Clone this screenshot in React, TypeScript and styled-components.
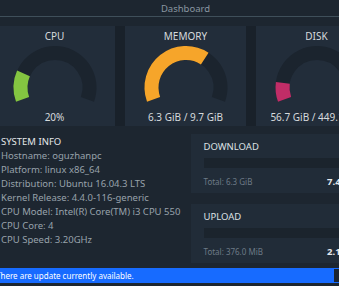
import React from 'react';
import styled, { createGlobalStyle } from 'styled-components';

const GlobalStyle = createGlobalStyle`
  html, body {
    margin: 0;
    padding: 0;
    background: #1d2630;
    overflow: hidden;
    font-family: 'Noto Sans', 'Open Sans', sans-serif;
  }
`;

const Window = styled.div`
  width: 403px;
  height: 286px;
  margin-left: -16px;
  display: flex;
  flex-direction: column;
  background: #1d2630;
`;

const TitleBar = styled.div`
  height: 16px;
  border-bottom: 1px solid #3f4f5a;
  display: flex;
  align-items: center;
  justify-content: center;
  font-size: 9.5px;
  color: #8a96a1;
`;

const Content = styled.div`
  padding: 9px 10px 0;
  display: flex;
  flex-direction: column;
`;

const GaugeRow = styled.div`
  display: grid;
  grid-template-columns: repeat(3, 1fr);
  gap: 10px;
  background: #19212a;
`;

const GaugeCard = styled.div`
  height: 100px;
  background: #222d3a;
  display: flex;
  flex-direction: column;
  align-items: center;
  padding-top: 4px;
  box-sizing: border-box;
`;

const CardTitle = styled.div`
  font-size: 10px;
  line-height: 12px;
  color: #d6dadd;
`;

const GaugeSvg = styled.svg`
  display: block;
  margin-top: 3px;
`;

const GaugeValue = styled.div`
  margin-top: 5px;
  font-size: 10px;
  line-height: 14px;
  color: #d6dadd;
  white-space: nowrap;
`;

const Bottom = styled.div`
  margin-top: 8px;
  display: grid;
  grid-template-columns: 1fr 1fr;
  gap: 10px;
`;

const InfoColumn = styled.div`
  padding: 1px 0 0 7px;
  display: flex;
  flex-direction: column;
`;

const InfoHeading = styled.div`
  font-size: 9.5px;
  line-height: 14px;
  color: #e3e6e9;
`;

const InfoLine = styled.div`
  font-size: 9.5px;
  line-height: 14px;
  color: #98a2ab;
  white-space: nowrap;
`;

const NetColumn = styled.div`
  display: flex;
  flex-direction: column;
  gap: 11px;
`;

const NetCard = styled.div`
  background: #212c38;
  padding: 7px 13px 4px;
  display: flex;
  flex-direction: column;
`;

const NetTitle = styled.div`
  font-size: 9.5px;
  line-height: 12px;
  color: #dde1e4;
`;

const NetBar = styled.div`
  margin-top: 5px;
  height: 10px;
  background: #1b242d;
`;

const NetFooter = styled.div`
  margin-top: 7px;
  display: flex;
  justify-content: space-between;
  align-items: center;
  line-height: 14px;
`;

const NetTotal = styled.span`
  font-size: 8px;
  color: #6d7a86;
`;

const NetSpeed = styled.span`
  font-size: 9.5px;
  font-weight: 700;
  color: #e6e9ec;
  white-space: nowrap;
`;

const StatusBar = styled.div`
  margin-top: 5px;
  margin-left: 12px;
  height: 15px;
  background: #176bff;
  display: flex;
  align-items: center;
  justify-content: space-between;
  padding-right: 12px;
`;

const StatusText = styled.span`
  font-size: 8px;
  color: #ffffff;
  white-space: nowrap;
`;

const StatusButton = styled.button`
  height: 13px;
  width: 41px;
  border: none;
  background: #1c2530;
  color: #dde1e4;
  font-size: 8px;
  padding: 0;
`;

const START = 200;
const SPAN = 220;
const CX = 45;
const CY = 42.5;
const R = 34.5;

const point = (deg: number) => {
  const rad = (deg * Math.PI) / 180;
  return [CX + R * Math.cos(rad), CY - R * Math.sin(rad)];
};

const arc = (from: number, to: number) => {
  const [x1, y1] = point(from);
  const [x2, y2] = point(to);
  const large = from - to > 180 ? 1 : 0;
  return `M ${x1} ${y1} A ${R} ${R} 0 ${large} 1 ${x2} ${y2}`;
};

const Gauge: React.FC<{ value: number; color: string }> = ({ value, color }) => (
  <GaugeSvg width={90} height={60} viewBox="0 0 90 60">
    <path d={arc(START, START - SPAN)} stroke="#1b242e" strokeWidth={14} fill="none" />
    <path d={arc(START, START - SPAN * value)} stroke={color} strokeWidth={14} fill="none" />
  </GaugeSvg>
);

const gauges = [
  { title: 'CPU', value: 0.2, color: '#84c541', label: '20%' },
  { title: 'MEMORY', value: 6.3 / 9.7, color: '#f6a52a', label: '6.3 GiB / 9.7 GiB' },
  { title: 'DISK', value: 56.7 / 449.1, color: '#c12d67', label: '56.7 GiB / 449.1 GiB' },
];

const info = [
  'Hostname: oguzhanpc',
  'Platform: linux x86_64',
  'Distribution: Ubuntu 16.04.3 LTS',
  'Kernel Release: 4.4.0-116-generic',
  'CPU Model: Intel(R) Core(TM) i3 CPU 550',
  'CPU Core: 4',
  'CPU Speed: 3.20GHz',
];

const network = [
  { title: 'DOWNLOAD', total: 'Total: 6.3 GiB', speed: '7.4 kB/s' },
  { title: 'UPLOAD', total: 'Total: 376.0 MiB', speed: '2.1 kB/s' },
];

export default function App() {
  return (
    <>
      <GlobalStyle />
      <Window>
        <TitleBar>Dashboard</TitleBar>
        <Content>
          <GaugeRow>
            {gauges.map((g) => (
              <GaugeCard key={g.title}>
                <CardTitle>{g.title}</CardTitle>
                <Gauge value={g.value} color={g.color} />
                <GaugeValue>{g.label}</GaugeValue>
              </GaugeCard>
            ))}
          </GaugeRow>
          <Bottom>
            <InfoColumn>
              <InfoHeading>SYSTEM INFO</InfoHeading>
              {info.map((line) => (
                <InfoLine key={line}>{line}</InfoLine>
              ))}
            </InfoColumn>
            <NetColumn>
              {network.map((n) => (
                <NetCard key={n.title}>
                  <NetTitle>{n.title}</NetTitle>
                  <NetBar />
                  <NetFooter>
                    <NetTotal>{n.total}</NetTotal>
                    <NetSpeed>{n.speed}</NetSpeed>
                  </NetFooter>
                </NetCard>
              ))}
            </NetColumn>
          </Bottom>
        </Content>
        <StatusBar>
          <StatusText>There are update currently available.</StatusText>
          <StatusButton>Update</StatusButton>
        </StatusBar>
      </Window>
    </>
  );
}
